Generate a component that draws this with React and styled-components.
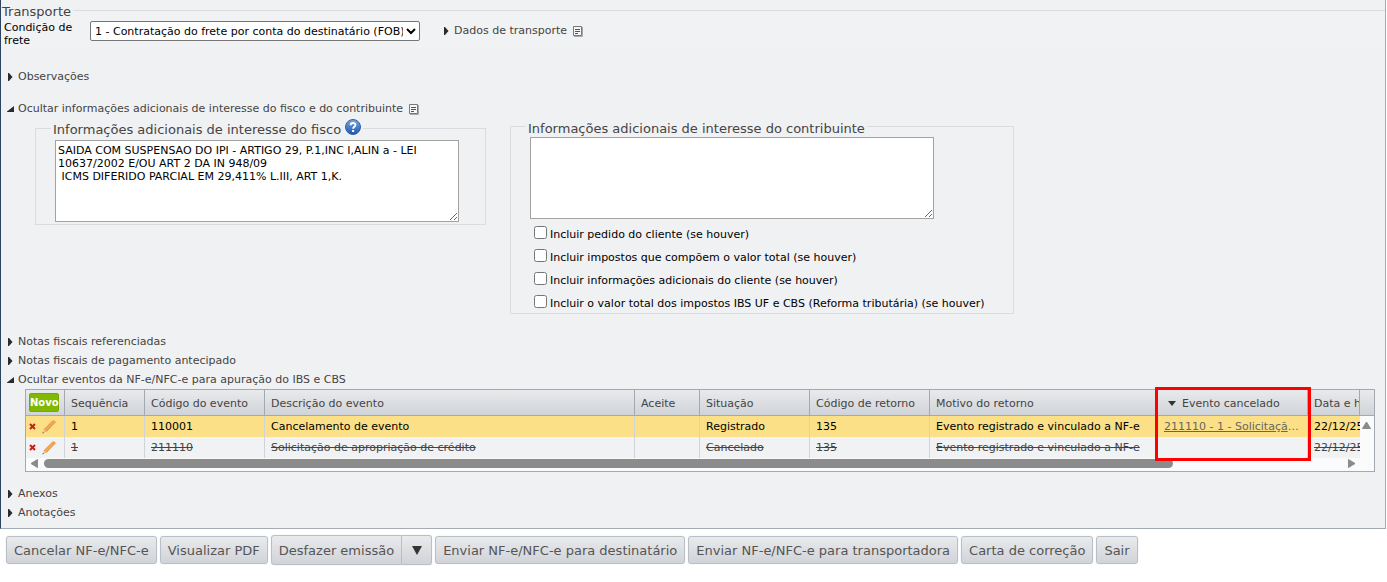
import React, { useState } from 'react';
import styled, { createGlobalStyle } from 'styled-components';

const GlobalStyle = createGlobalStyle`
  * {
    box-sizing: border-box;
  }

  body {
    margin: 0;
    background: #fff;
    font-family: Verdana, 'DejaVu Sans', sans-serif;
    font-size: 11px;
    line-height: 13px;
    color: #000;
  }

  button, select, textarea, input {
    font-family: inherit;
    font-size: inherit;
  }
`;

const Panel = styled.main`
  margin-right: 1px;
  padding-bottom: 6px;
  background: #f0f1f3;
  border-left: 1px solid #2b4261;
  border-right: 1px solid #a3abb5;
  border-bottom: 1px solid #a3abb5;
`;

const TransportGroup = styled.fieldset`
  margin: 0;
  padding: 1px 0 0 3px;
  border: 0;
  border-top: 1px solid #dadcdf;
  background: #f1f2f3;
`;

const Legend = styled.legend`
  display: flex;
  align-items: center;
  gap: 4px;
  height: ${({ $tall }) => ($tall ? '20px' : '17px')};
  margin-left: -4px;
  padding: 3px 2px 0;
  font-size: 13px;
  color: #444;
`;

const FieldRow = styled.div`
  display: flex;
  align-items: flex-start;
`;

const FieldLabel = styled.label`
  width: 86px;
  padding-right: 8px;
`;

const FreightSelect = styled.select`
  width: 330px;
  height: 20px;
  margin-right: 23px;
  padding: 0;
  background: #fff;
  color: #000;
  border: 1px solid #767676;
  border-radius: 2px;
`;

const Toggle = styled.button`
  display: flex;
  align-items: center;
  height: 19px;
  margin-top: ${({ $space }) => $space || '0'};
  padding: 0;
  border: 0;
  background: none;
  color: #444;
  cursor: pointer;

  > svg:first-child {
    margin-right: 4px;
  }
`;

const Section = styled.div`
  padding: 0 10px 0 6px;
  margin-top: ${({ $space }) => $space || '0'};
`;

const NoteIcon = styled.svg`
  width: 10px;
  height: 11px;
  margin: 2px 0 0 6px;
`;

const InfoGroups = styled.div`
  display: flex;
  align-items: flex-start;
  gap: 24px;
  padding-left: 28px;
`;

const InfoGroup = styled.fieldset`
  width: ${({ $width }) => $width};
  margin: 0;
  padding: 2px 19px 0;
  border: 1px solid #dadcdf;
`;

const InfoText = styled.textarea`
  display: block;
  width: 404px;
  height: 82px;
  margin: 0 0 2px;
  padding: 3px 2px;
  background: #fff;
  color: #000;
  border: 1px solid #a2a2a2;
  line-height: 13px;
`;

const HelpButton = styled.button`
  width: 16px;
  height: 16px;
  margin-bottom: 5px;
  padding: 0;
  border: 0;
  background: none;
  cursor: pointer;

  svg {
    display: block;
  }
`;

const CheckList = styled.div`
  display: grid;
  grid-auto-rows: 20px;
  gap: 3px;
  padding: 3px 0 0 4px;
`;

const CheckLabel = styled.label`
  display: flex;
  align-items: center;
  gap: 3px;
  white-space: nowrap;

  input {
    width: 13px;
    height: 13px;
    margin: 0 0 3px;
  }
`;

const Grid = styled.div`
  margin-left: 18px;
  border: 1px solid #a3a9b3;
  background: #fbfbfb;
`;

const Table = styled.table`
  width: 100%;
  table-layout: fixed;
  border-collapse: separate;
  border-spacing: 0;
`;

const HeadCell = styled.th`
  position: relative;
  height: 26px;
  padding: ${({ $tool }) => ($tool ? '0 0 0 3px' : '1px 0 0 6px')};
  border-right: ${({ $last }) => ($last ? '0' : '1px solid #a3a9b3')};
  border-bottom: 1px solid #a3a9b3;
  background: linear-gradient(#e9eaec, #d0d3d8);
  color: #444;
  font-weight: normal;
  text-align: left;
  white-space: nowrap;
`;

const Clip = styled.div`
  overflow: hidden;
  white-space: nowrap;
`;

/* frame over the whole "Evento cancelado" column */
const Highlight = styled.span`
  position: absolute;
  z-index: 1;
  top: -3px;
  left: -3px;
  right: -4px;
  height: 74px;
  border: 3px solid #f00;
  pointer-events: none;
`;

const SortLabel = styled.span`
  display: flex;
  align-items: center;
  gap: 6px;
  padding-left: 4px;
`;

const Row = styled.tr`
  background: ${({ $selected }) => ($selected ? '#fbe087' : '#f1f2f4')};
  color: ${({ $cancelled }) => ($cancelled ? '#444' : '#000')};
  text-decoration: ${({ $cancelled }) => ($cancelled ? 'line-through' : 'none')};
`;

const Cell = styled.td`
  height: 21px;
  padding: 0 0 0 6px;
  border-right: ${({ $edge }) => ($edge ? '0' : '1px solid #d0d3d8')};
`;

const Gutter = styled.td`
  padding: 4px 0 0 2px;
  background: #fbfbfb;
  vertical-align: top;
`;

const EventLink = styled.a`
  display: block;
  margin-right: 5px;
  overflow: hidden;
  text-overflow: ellipsis;
  color: #666;
  text-decoration: underline;
`;

const Tools = styled.div`
  display: flex;
  align-items: center;
  gap: 6px;
  margin-left: -3px;
`;

const IconButton = styled.button`
  display: flex;
  padding: 0;
  border: 0;
  background: none;
  cursor: pointer;
`;

const NewButton = styled.button`
  display: block;
  width: 30px;
  height: 19px;
  padding: 0;
  border: 1px solid #76a800;
  border-radius: 2px;
  background: #80b900;
  color: #fff;
  font-weight: bold;
  font-size: 10px;
  cursor: pointer;
`;

const ScrollBar = styled.div`
  display: flex;
  align-items: center;
  gap: 5px;
  height: 13px;
  padding: 0 18px 2px 4px;

  svg {
    display: block;
  }
`;

const ScrollTrack = styled.div`
  flex: 1;
`;

const ScrollThumb = styled.div`
  width: 87%;
  height: 9px;
  border-radius: 5px;
  background: #8b8b8b;
`;

const Actions = styled.footer`
  display: flex;
  align-items: center;
  gap: 3px;
  padding: 6px;
`;

const ActionButton = styled.button`
  height: 28px;
  padding: 0 7px;
  border: 1px solid #b9bfc6;
  border-radius: 3px;
  background: linear-gradient(#e9eaec, #d0d3d8);
  box-shadow: 0 0 1px #b9bfc6;
  color: #555;
  font-size: 13px;
  white-space: nowrap;
  cursor: pointer;
`;

const SplitButton = styled.div`
  display: flex;

  ${ActionButton} {
    height: 30px;
  }

  ${ActionButton}:first-child {
    border-radius: 3px 0 0 3px;
  }

  ${ActionButton}:last-child {
    width: 30px;
    border-left: 0;
    border-radius: 0 3px 3px 0;
  }
`;

const Arrow = ({ open }) => (
  <svg width="7" height="8" viewBox="0 0 7 8" aria-hidden="true">
    <path d={open ? 'M7 1V7H0V6.500Z' : 'M1 0H2L5.500 4L2 8H1Z'} fill="#2b2b2b" />
  </svg>
);

const Note = () => (
  <NoteIcon viewBox="0 0 10 11" aria-hidden="true">
    <path d="M.5.5h8v9h-8z" fill="#f7f7f7" stroke="#777" />
    <path d="M9.5 1v9.500H1" fill="none" stroke="#aaa" />
    <path d="M2 3.5h5M2 5.5h5M2 7.5h3" stroke="#555" />
  </NoteIcon>
);

const HelpIcon = () => (
  <svg width="16" height="16" viewBox="0 0 16 16" aria-hidden="true">
    <defs>
      <linearGradient id="help" x1="0" y1="0" x2="0" y2="1">
        <stop offset="0" stopColor="#7fa9de" />
        <stop offset="1" stopColor="#1c55b0" />
      </linearGradient>
    </defs>
    <circle cx="8" cy="8" r="7.5" fill="url(#help)" stroke="#2c5fae" />
    <path d="M5.7 6.2C5.7 3.3 10.4 3.4 10.4 6C10.4 7.7 8.1 7.7 8.1 9.7" fill="none" stroke="#fff" strokeWidth="1.9" />
    <path d="M7.1 11h2v2h-2z" fill="#fff" />
  </svg>
);

const DeleteIcon = () => (
  <svg width="7" height="7" viewBox="0 0 7 7" aria-hidden="true">
    <path d="M1 1L6 6M6 1L1 6" stroke="#c3201f" strokeWidth="2" />
  </svg>
);

const PencilIcon = () => (
  <svg width="14" height="14" viewBox="0 0 14 14" aria-hidden="true">
    <path d="M2 9.500L10.500 1Q12 0 13.500 2L4.500 11.500Z" fill="#f2a047" stroke="#dc8738" strokeWidth=".6" />
    <path d="M3.500 10L12 1.500" stroke="#f7b673" strokeWidth=".8" />
    <path d="M2 9.500L.5 13L4.500 11.500Z" fill="#d9c6a5" />
    <path d="M.4 13.400L1 11.700L2.100 12.800Z" fill="#555" />
  </svg>
);

const ScrollArrow = ({ d }) => (
  <svg width="9" height="9" viewBox="0 0 9 9" aria-hidden="true">
    <path d={d} fill="#8b8b8b" stroke="#8b8b8b" strokeLinejoin="round" />
  </svg>
);

const Disclosure = ({ label, initialOpen = false, note, space }) => {
  const [open, setOpen] = useState(initialOpen);

  return (
    <Toggle type="button" aria-expanded={open} $space={space} onClick={() => setOpen(!open)}>
      <Arrow open={open} />
      <span>{label}</span>
      {note && <Note />}
    </Toggle>
  );
};

const fiscalText = `SAIDA COM SUSPENSAO DO IPI - ARTIGO 29, P.1,INC I,ALIN a - LEI 10637/2002 E/OU ART 2 DA IN 948/09
 ICMS DIFERIDO PARCIAL EM 29,411% L.III, ART 1,K.`;

const includeOptions = [
  'Incluir pedido do cliente (se houver)',
  'Incluir impostos que compõem o valor total (se houver)',
  'Incluir informações adicionais do cliente (se houver)',
  'Incluir o valor total dos impostos IBS UF e CBS (Reforma tributária) (se houver)'
];

const columns = [
  { label: 'Sequência', width: 80 },
  { label: 'Código do evento', width: 120 },
  { label: 'Descrição do evento', width: 370 },
  { label: 'Aceite', width: 65 },
  { label: 'Situação', width: 110 },
  { label: 'Código de retorno', width: 120 },
  { label: 'Motivo do retorno', width: 228 },
  { label: 'Evento cancelado', width: 150, sorted: true },
  { label: 'Data e h' }
];

const events = [
  {
    id: '110001',
    selected: true,
    link: '211110 - 1 - Solicitação de apropriação de crédito',
    values: ['1', '110001', 'Cancelamento de evento', '', 'Registrado', '135', 'Evento registrado e vinculado a NF-e'],
    date: '22/12/25'
  },
  {
    id: '211110',
    cancelled: true,
    values: ['1', '211110', 'Solicitação de apropriação de crédito', '', 'Cancelado', '135', 'Evento registrado e vinculado a NF-e'],
    date: '22/12/25'
  }
];

const EventsGrid = () => (
  <Grid>
    <Table>
      <colgroup>
        <col style={{ width: 39 }} />
        {columns.map(column => (
          <col key={column.label} style={{ width: column.width }} />
        ))}
        <col style={{ width: 14 }} />
      </colgroup>
      <thead>
        <tr>
          <HeadCell $tool>
            <NewButton type="button">Novo</NewButton>
          </HeadCell>
          {columns.map(column => (
            <HeadCell key={column.label}>
              {column.sorted ? (
                <>
                  <SortLabel>
                    <svg width="8" height="5" viewBox="0 0 8 5" aria-hidden="true">
                      <path d="M0 0H8L4 5Z" fill="#333" />
                    </svg>
                    {column.label}
                  </SortLabel>
                  <Highlight />
                </>
              ) : (
                <Clip>{column.label}</Clip>
              )}
            </HeadCell>
          ))}
          <HeadCell $last aria-hidden="true" />
        </tr>
      </thead>
      <tbody>
        {events.map((event, index) => (
          <Row key={event.id} $selected={event.selected} $cancelled={event.cancelled}>
            <Cell>
              <Tools>
                <IconButton type="button" aria-label="Excluir"><DeleteIcon /></IconButton>
                <IconButton type="button" aria-label="Editar"><PencilIcon /></IconButton>
              </Tools>
            </Cell>
            {event.values.map((value, i) => (
              <Cell key={columns[i].label}><Clip>{value}</Clip></Cell>
            ))}
            <Cell>
              {event.link && <Clip><EventLink href="#evento">{event.link}</EventLink></Clip>}
            </Cell>
            <Cell $edge><Clip>{event.date}</Clip></Cell>
            {index === 0 && (
              <Gutter rowSpan={events.length}>
                <ScrollArrow d="M4.5 1L8.500 7.500H.5Z" />
              </Gutter>
            )}
          </Row>
        ))}
      </tbody>
    </Table>
    <ScrollBar>
      <ScrollArrow d="M7.500 .5V8.500L1 4.500Z" />
      <ScrollTrack>
        <ScrollThumb />
      </ScrollTrack>
      <ScrollArrow d="M1.500 .5V8.500L8 4.500Z" />
    </ScrollBar>
  </Grid>
);

const App = () => (
  <>
    <GlobalStyle />
    <Panel>
      <TransportGroup>
        <Legend $tall>Transporte</Legend>
        <FieldRow>
          <FieldLabel htmlFor="frete">Condição de frete</FieldLabel>
          <FreightSelect id="frete">
            <option>1 - Contratação do frete por conta do destinatário (FOB)</option>
          </FreightSelect>
          <Disclosure label="Dados de transporte" note />
        </FieldRow>
      </TransportGroup>

      <Section $space="20px">
        <Disclosure label="Observações" />
        <Disclosure
          label="Ocultar informações adicionais de interesse do fisco e do contribuinte"
          initialOpen
          note
          space="13px"
        />
        <InfoGroups>
          <InfoGroup $width="451px">
            <Legend $tall>
              <span id="fisco">Informações adicionais de interesse do fisco</span>
              <HelpButton type="button" aria-label="Ajuda"><HelpIcon /></HelpButton>
            </Legend>
            <InfoText aria-labelledby="fisco" defaultValue={fiscalText} />
          </InfoGroup>
          <InfoGroup $width="504px">
            <Legend id="contribuinte">Informações adicionais de interesse do contribuinte</Legend>
            <InfoText aria-labelledby="contribuinte" />
            <CheckList>
              {includeOptions.map(option => (
                <CheckLabel key={option}>
                  <input type="checkbox" />
                  {option}
                </CheckLabel>
              ))}
            </CheckList>
          </InfoGroup>
        </InfoGroups>
      </Section>

      <Section $space="18px">
        <Disclosure label="Notas fiscais referenciadas" />
        <Disclosure label="Notas fiscais de pagamento antecipado" />
        <Disclosure label="Ocultar eventos da NF-e/NFC-e para apuração do IBS e CBS" initialOpen />
        <EventsGrid />
        <Disclosure label="Anexos" space="12px" />
        <Disclosure label="Anotações" />
      </Section>
    </Panel>

    <Actions>
      <ActionButton type="button">Cancelar NF-e/NFC-e</ActionButton>
      <ActionButton type="button">Visualizar PDF</ActionButton>
      <SplitButton>
        <ActionButton type="button">Desfazer emissão</ActionButton>
        <ActionButton type="button" aria-label="Mais opções">
          <svg width="10" height="9" viewBox="0 0 10 9" aria-hidden="true">
            <path d="M0 0H10L5 9Z" fill="#333" />
          </svg>
        </ActionButton>
      </SplitButton>
      <ActionButton type="button">Enviar NF-e/NFC-e para destinatário</ActionButton>
      <ActionButton type="button">Enviar NF-e/NFC-e para transportadora</ActionButton>
      <ActionButton type="button">Carta de correção</ActionButton>
      <ActionButton type="button">Sair</ActionButton>
    </Actions>
  </>
);

export default App;
